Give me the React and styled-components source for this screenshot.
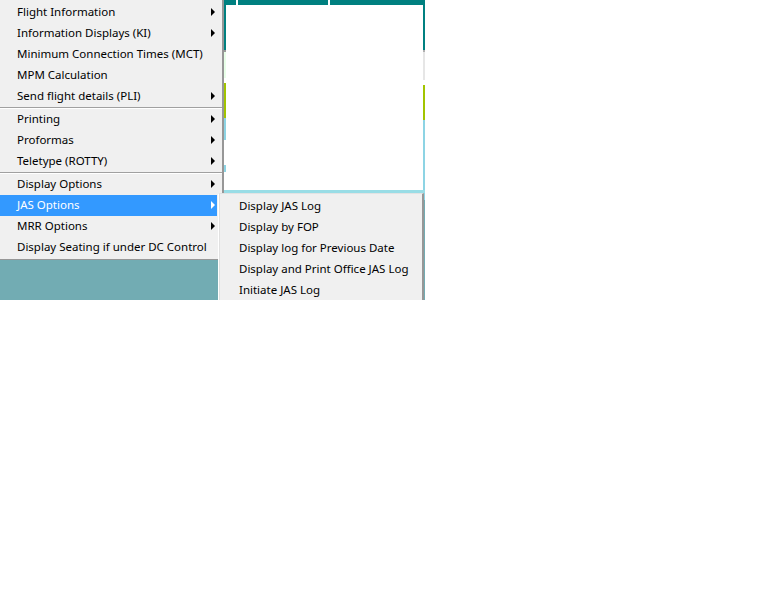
import React from "react";
import styled, { createGlobalStyle } from "styled-components";

const Global = createGlobalStyle`
  html, body { margin: 0; padding: 0; background: #ffffff; }
  body { font-family: "Noto Sans", "DejaVu Sans", sans-serif; }
`;

const Stage = styled.div`
  position: relative;
  width: 425px;
  height: 300px;
  overflow: hidden;
  background: #72acb3;
`;

const BackApp = styled.div`
  margin-left: 224px;
  width: 201px;
  height: 193px;
  display: flex;
  flex-direction: column;
  background: #ffffff;
`;

const HeaderBar = styled.div`
  height: 5px;
  flex-shrink: 0;
  display: flex;
  gap: 2px;
  background: #ffffff;
`;

const HeaderCell = styled.div`
  flex-grow: ${(p) => p.$grow};
  flex-basis: 0px;
  height: 5px;
  background: #008080;
`;

const BodyRow = styled.div`
  flex: 1;
  display: flex;
  min-height: 0;
`;

const Strip = styled.div`
  width: 2px;
  display: flex;
  flex-direction: column;
`;

const Seg = styled.div`
  height: ${(p) => p.$h}px;
  background: ${(p) => p.$c};
  flex-shrink: 0;
`;

const WhitePanel = styled.div`
  flex: 1;
  background: #ffffff;
`;

const FooterBar = styled.div`
  height: 3px;
  flex-shrink: 0;
  background: #99dde6;
`;

const Menu = styled.div`
  position: absolute;
  left: 0;
  top: 0;
  width: 222px;
  padding: 2px 0 1px 0;
  background: #f0f0f0;
  border-right: 2px solid #979797;
  border-bottom: 1px solid #979797;
`;

const SubMenu = styled.div`
  position: absolute;
  left: 218px;
  top: 193px;
  width: 203px;
  height: 120px;
  padding-top: 2px;
  background: #f0f0f0;
  border-left: 1px solid #ffffff;
  border-top: 1px solid #e3e3e3;
  border-right: 2px solid #979797;
  box-shadow: inset 1px 0 0 #e0e0e0;
`;

const Item = styled.div`
  position: relative;
  box-sizing: border-box;
  height: 21px;
  display: flex;
  align-items: center;
  padding-left: ${(p) => p.$indent}px;
  padding-bottom: 2px;
  font-size: 11.5px;
  color: ${(p) => (p.$active ? "#ffffff" : "#000000")};
  background: ${(p) => (p.$active ? "#3399ff" : "transparent")};
  margin-right: ${(p) => (p.$active ? "5px" : "0")};
  white-space: nowrap;
`;

const Arrow = styled.span`
  position: absolute;
  left: 211px;
  top: 6px;
  width: 0;
  height: 0;
  border-top: 4px solid transparent;
  border-bottom: 4px solid transparent;
  border-left: 4px solid ${(p) => (p.$active ? "#ffffff" : "#000000")};
`;

const Separator = styled.div`
  height: 1px;
  margin: 0 0 1px 0;
  background: #a0a0a0;
  box-shadow: 0 1px 0 #ffffff;
`;

const mainGroups = [
  [
    { label: "Flight Information", sub: true },
    { label: "Information Displays (KI)", sub: true },
    { label: "Minimum Connection Times (MCT)" },
    { label: "MPM Calculation" },
    { label: "Send flight details (PLI)", sub: true },
  ],
  [
    { label: "Printing", sub: true },
    { label: "Proformas", sub: true },
    { label: "Teletype (ROTTY)", sub: true },
  ],
  [
    { label: "Display Options", sub: true },
    { label: "JAS Options", sub: true, active: true },
    { label: "MRR Options", sub: true },
    { label: "Display Seating if under DC Control" },
  ],
];

const subItems = [
  "Display JAS Log",
  "Display by FOP",
  "Display log for Previous Date",
  "Display and Print Office JAS Log",
  "Initiate JAS Log",
];

const leftSegs = [
  ["#008080", 45],
  ["#9a9a9a", 2],
  ["#e8ffe8", 26],
  ["#ffffff", 5],
  ["#a2c400", 35],
  ["#8dd4e4", 22],
  ["#ffffff", 25],
  ["#8dd4e4", 7],
  ["#ffffff", 40],
];

const rightSegs = [
  ["#008080", 45],
  ["#b0b0b0", 2],
  ["#e6e6e6", 28],
  ["#ffffff", 5],
  ["#a2c400", 35],
  ["#8dd4e4", 80],
];

export default function App() {
  return (
    <>
      <Global />
      <Stage>
        <BackApp>
          <HeaderBar>
            <HeaderCell $grow={12} />
            <HeaderCell $grow={90} />
            <HeaderCell $grow={95} />
          </HeaderBar>
          <BodyRow>
            <Strip>
              {leftSegs.map(([c, h], i) => (
                <Seg key={i} $c={c} $h={h} />
              ))}
            </Strip>
            <WhitePanel />
            <Strip>
              {rightSegs.map(([c, h], i) => (
                <Seg key={i} $c={c} $h={h} />
              ))}
            </Strip>
          </BodyRow>
          <FooterBar />
        </BackApp>

        <Menu>
          {mainGroups.map((group, gi) => (
            <React.Fragment key={gi}>
              {gi > 0 && <Separator />}
              {group.map((it) => (
                <Item key={it.label} $indent={17} $active={it.active}>
                  {it.label}
                  {it.sub && <Arrow $active={it.active} />}
                </Item>
              ))}
            </React.Fragment>
          ))}
        </Menu>

        <SubMenu>
          {subItems.map((s) => (
            <Item key={s} $indent={20}>
              {s}
            </Item>
          ))}
        </SubMenu>
      </Stage>
    </>
  );
}
